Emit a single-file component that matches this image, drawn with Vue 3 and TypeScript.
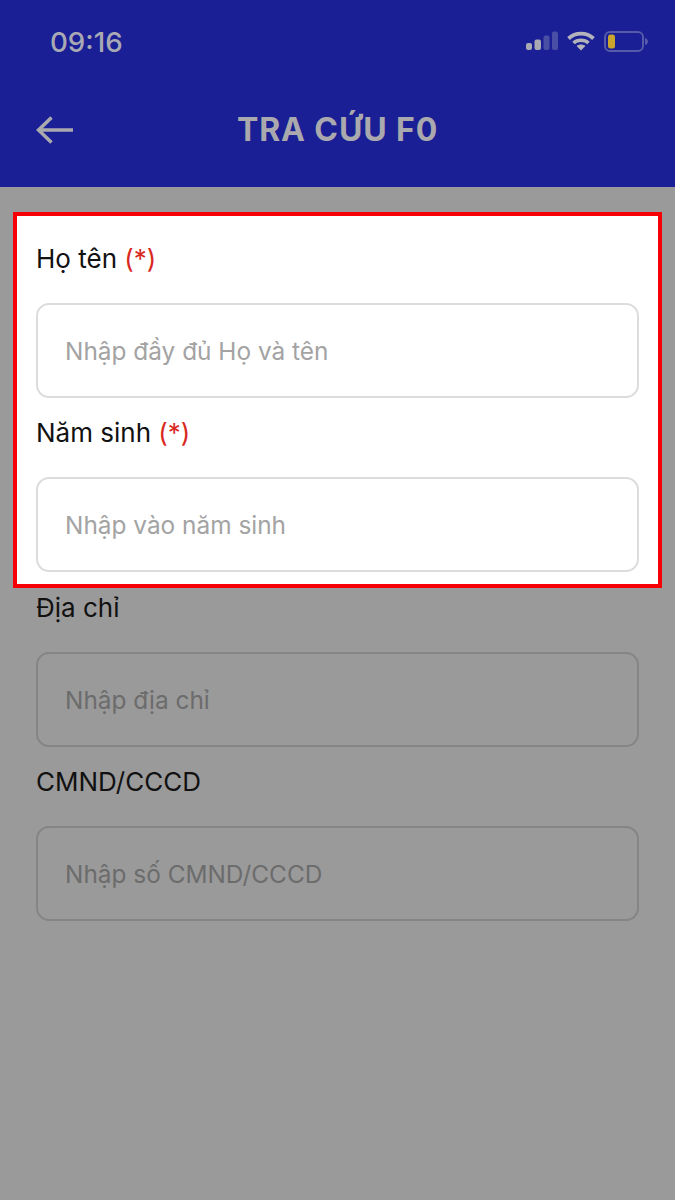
<script setup lang="ts">
interface Field {
  label: string
  placeholder: string
  required?: boolean
}

const highlighted: Field[] = [
  { label: 'Họ tên', placeholder: 'Nhập đầy đủ Họ và tên', required: true },
  { label: 'Năm sinh', placeholder: 'Nhập vào năm sinh', required: true },
]

const others: Field[] = [
  { label: 'Địa chỉ', placeholder: 'Nhập địa chỉ' },
  { label: 'CMND/CCCD', placeholder: 'Nhập số CMND/CCCD' },
]
</script>

<template>
  <div class="screen">
    <header class="header">
      <div class="status-bar">
        <span class="time">09:16</span>
        <div class="status-icons">
          <svg class="signal" width="32" height="20" viewBox="0 0 32 20">
            <rect x="0" y="12" width="6" height="7" rx="2" fill="#a9a9b4" />
            <rect x="8.500" y="8.500" width="6.500" height="10.500" rx="2" fill="#a9a9b4" />
            <rect x="17.500" y="4.500" width="6" height="14.500" rx="2" fill="#4a4fa6" />
            <rect x="26" y="0.500" width="6" height="18.500" rx="2" fill="#4a4fa6" />
          </svg>
          <svg class="wifi" width="28" height="20" viewBox="0 0 28 20" fill="none">
            <path d="M1.500 7.500C8.500 1 19.500 1 26.500 7.500" stroke="#b3b3bb" stroke-width="3.800" />
            <path d="M6.500 12C10.500 8.400 17.500 8.400 21.500 12" stroke="#b3b3bb" stroke-width="3.600" />
            <path d="M14 19.500L9.600 15C12 13 16 13 18.400 15Z" fill="#b3b3bb" />
          </svg>
          <svg class="battery" width="44" height="21" viewBox="0 0 44 21" fill="none">
            <rect x="1" y="1" width="38" height="19" rx="5" stroke="#555aa9" stroke-width="2" />
            <rect x="4" y="3.500" width="7" height="14" rx="2.500" fill="#c9a52e" />
            <path d="M41 7C43 7.500 44 9 44 10.500C44 12 43 13.500 41 14Z" fill="#555aa9" />
          </svg>
        </div>
      </div>
      <div class="nav">
        <svg class="back" width="38" height="28" viewBox="0 0 38 28" fill="none">
          <path d="M37 14H3M15.500 1.500L2.500 14L15.500 26.500" stroke="#a9a9ae" stroke-width="3.600" />
        </svg>
        <h1 class="title">TRA CỨU F0</h1>
      </div>
    </header>

    <main class="content">
      <!-- Highlighted part of the form -->
      <section class="highlight">
        <div v-for="field in highlighted" :key="field.label" class="field">
          <label class="label">
            {{ field.label }} <span v-if="field.required" class="required">(*)</span>
          </label>
          <input class="input" type="text" :placeholder="field.placeholder" />
        </div>
      </section>

      <section class="rest">
        <div v-for="field in others" :key="field.label" class="field">
          <label class="label">{{ field.label }}</label>
          <input class="input" type="text" :placeholder="field.placeholder" />
        </div>
      </section>
    </main>
  </div>
</template>

<style scoped>
* {
  box-sizing: border-box;
}

.screen {
  display: flex;
  flex-direction: column;
  height: 1200px;
  overflow: hidden;
  background: #9a9a9a;
  font-family: Inter, 'Noto Sans', sans-serif;
}

/* Header */
.header {
  height: 187px;
  background: #1a1f95;
}

.status-bar {
  display: flex;
  justify-content: space-between;
  align-items: center;
  height: 82px;
  padding: 0 27px 0 50px;
}

.time {
  padding-top: 2px;
  font-size: 27.700px;
  font-weight: 500;
  color: #a9a9b4;
}

.status-icons {
  display: flex;
  align-items: center;
  gap: 9px;
}

.nav {
  position: relative;
  display: flex;
  justify-content: center;
  align-items: center;
  height: 94px;
}

.back {
  position: absolute;
  left: 36px;
  top: 34px;
}

.title {
  margin: 0;
  font-size: 32px;
  font-weight: 700;
  letter-spacing: 0.900px;
  color: #a9a9ae;
}

/* Form */
.content {
  padding: 25px 13px 0;
}

.highlight {
  padding: 24px 19px 12px;
  background: #fff;
  border: 4px solid #f60006;
}

.rest {
  padding: 1px 23px 0;
}

.field {
  margin-bottom: 16px;
}

.highlight .field:last-child {
  margin-bottom: 0;
}

.label {
  display: block;
  padding-top: 1px;
  margin-bottom: 26px;
  font-size: 26px;
  line-height: 36px;
  color: #111;
}

.required {
  color: #d9291f;
}

.input {
  display: block;
  width: 100%;
  height: 95px;
  padding: 0 27px;
  background: transparent;
  border: 2px solid #dcdcdc;
  border-radius: 13px;
  outline: none;
  font-family: inherit;
  font-size: 24.400px;
}

.input::placeholder {
  color: #a3a3a3;
  opacity: 1;
}

.rest .input {
  border-color: #858585;
}

.rest .input::placeholder {
  color: #6c6c6c;
}
</style>
